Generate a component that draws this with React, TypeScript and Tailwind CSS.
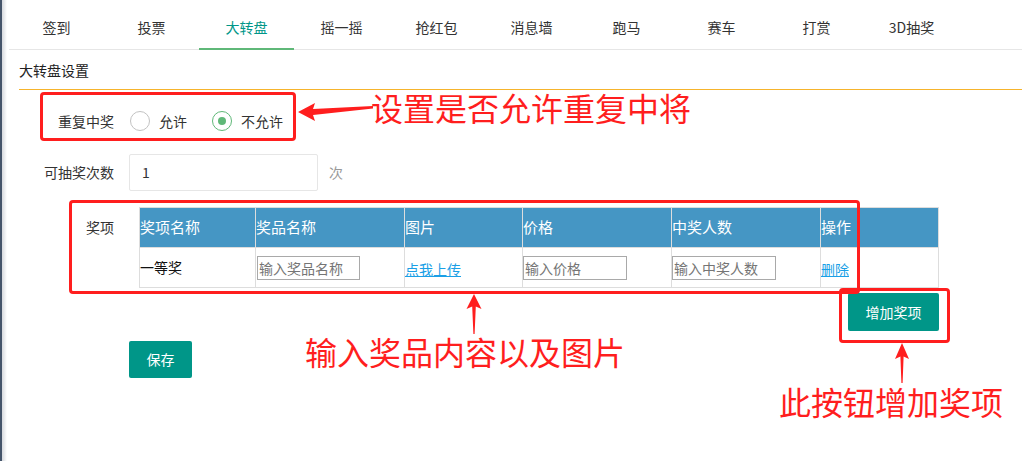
import React from "react";

const tabs = ["签到", "投票", "大转盘", "摇一摇", "抢红包", "消息墙", "跑马", "赛车", "打赏", "3D抽奖"];
const cols = [
    { name: "奖项名称", w: "w-[116px]" },
    { name: "奖品名称", w: "w-[149px]" },
    { name: "图片", w: "w-[118px]" },
    { name: "价格", w: "w-[149px]" },
    { name: "中奖人数", w: "w-[149px]" },
    { name: "操作", w: "w-[118px]" },
];

function Radio({ label, checked }: { label: string; checked?: boolean }) {
    return (
        <label className="flex items-center gap-[9px] cursor-pointer">
            <span
                className={`w-[20px] h-[20px] rounded-full border-[1.5px] flex items-center justify-center ${
                    checked ? "border-[#5fb878]" : "border-[#c2c2c2]"
                }`}
            >
                {checked && <span className="w-[8px] h-[8px] rounded-full bg-[#5fb878]" />}
            </span>
            <span className="text-[14px] text-[#333]">{label}</span>
        </label>
    );
}

function SmallInput({ placeholder, w }: { placeholder: string; w: string }) {
    return (
        <input
            placeholder={placeholder}
            className={`${w} h-[24px] border border-[#a9a9a9] px-[1px] text-[14px] text-[#333] placeholder:text-[#757575] outline-none`}
        />
    );
}

export default function App() {
    return (
        <div className="relative w-[1022px] h-[461px] overflow-hidden bg-white flex font-['Noto_Sans_CJK_SC',sans-serif] text-[#333]">
            <div className="w-[2px] bg-[#44546a] shrink-0" />
            <div className="w-[5px] shrink-0 bg-gradient-to-r from-[#d6d9de] to-white" />

            <div className="flex-1 min-w-0 pl-[2px]">
                {/* tabs */}
                <div className="flex border-b border-[#e6e6e6] h-[50px]">
                    {tabs.map((t, i) => (
                        <div
                            key={t}
                            className={`w-[95px] h-[50px] flex items-center justify-center pt-[6px] text-[14px] border-b-2 ${
                                i === 2 ? "border-[#5fb878] text-[#009688]" : "border-transparent text-[#333]"
                            }`}
                        >
                            {t}
                        </div>
                    ))}
                </div>

                <div className="ml-[10px]">
                    <div className="h-[40px] border-b border-[#f6b42c] flex items-center pt-[1px] text-[14px] text-[#222]">
                        大转盘设置
                    </div>

                    {/* form */}
                    <div className="pt-[12px]">
                        <div className="flex items-center h-[38px]">
                            <div className="w-[95px] text-right text-[14px]">重复中奖</div>
                            <div className="ml-[16px] flex items-center gap-[25px]">
                                <Radio label="允许" />
                                <Radio label="不允许" checked />
                            </div>
                        </div>

                        <div className="flex items-center mt-[14px] h-[37px]">
                            <div className="w-[95px] text-right text-[14px]">可抽奖次数</div>
                            <div className="ml-[15px] w-[189px] h-[37px] border border-[#e6e6e6] rounded-[2px] flex items-center pl-[12px] text-[14px]">
                                1
                            </div>
                            <div className="ml-[11px] text-[14px] text-[#999]">次</div>
                        </div>

                        <div className="flex items-start mt-[16px]">
                            <div className="w-[95px] text-right text-[14px] h-[40px] flex items-center justify-end">奖项</div>
                            <div className="ml-[25px]">
                                <table className="border-collapse border border-[#dddddd]">
                                    <thead>
                                        <tr className="bg-[#4596c4] h-[40px]">
                                            {cols.map((c) => (
                                                <th
                                                    key={c.name}
                                                    className={`${c.w} border border-[#dddddd] text-left font-normal text-white text-[15px] px-0 align-middle`}
                                                >
                                                    {c.name}
                                                </th>
                                            ))}
                                        </tr>
                                    </thead>
                                    <tbody>
                                        <tr className="h-[40px]">
                                            <td className="border border-[#dddddd] text-[14px] text-[#111]">一等奖</td>
                                            <td className="border border-[#dddddd] pl-[1px]">
                                                <SmallInput placeholder="输入奖品名称" w="w-[103px]" />
                                            </td>
                                            <td className="border border-[#dddddd]">
                                                <a className="text-[14px] text-[#1a9fe6] underline cursor-pointer">点我上传</a>
                                            </td>
                                            <td className="border border-[#dddddd]">
                                                <SmallInput placeholder="输入价格" w="w-[104px]" />
                                            </td>
                                            <td className="border border-[#dddddd]">
                                                <SmallInput placeholder="输入中奖人数" w="w-[104px]" />
                                            </td>
                                            <td className="border border-[#dddddd]">
                                                <a className="text-[14px] text-[#1a9fe6] underline cursor-pointer">删除</a>
                                            </td>
                                        </tr>
                                    </tbody>
                                </table>
                                <div className="flex justify-end mt-[5px]">
                                    <button className="w-[91px] h-[38px] rounded-[2px] bg-[#009688] text-white text-[14px]">
                                        增加奖项
                                    </button>
                                </div>
                            </div>
                        </div>

                        <div className="ml-[110px] mt-[10px]">
                            <button className="w-[63px] h-[37px] rounded-[2px] bg-[#009688] text-white text-[14px]">保存</button>
                        </div>
                    </div>
                </div>
            </div>

            {/* annotations */}
            <div className="absolute left-[40px] top-[92px] w-[256px] h-[49px] border-[3px] border-[#ff1e1e] rounded-[4px]" />
            <svg className="absolute left-[298px] top-[100px]" width="76" height="22" viewBox="0 0 76 22">
                <path d="M0 12 L17 3 L15 9 L75 6 L75 8.5 L15 15 L17 21 Z" fill="#ff1e1e" />
            </svg>
            <div className="absolute left-[371px] top-[86px] text-[32px] leading-[42px] text-[#ff1e1e] whitespace-nowrap">
                设置是否允许重复中将
            </div>

            <div className="absolute left-[69px] top-[200px] w-[791px] h-[94px] border-[3px] border-[#ff1e1e] rounded-[4px]" />
            <svg className="absolute left-[465px] top-[294px]" width="18" height="40" viewBox="0 0 18 40">
                <path d="M9 0 L16.5 15 L10.8 12.5 L9.6 40 L8.4 40 L7.2 12.5 L1.5 15 Z" fill="#ff1e1e" />
            </svg>
            <div className="absolute left-[305px] top-[330px] text-[32px] leading-[42px] text-[#ff1e1e] whitespace-nowrap">
                输入奖品内容以及图片
            </div>

            <div className="absolute left-[839px] top-[288px] w-[111px] h-[55px] border-[3px] border-[#ff1e1e] rounded-[4px]" />
            <svg className="absolute left-[893px] top-[343px]" width="18" height="40" viewBox="0 0 18 40">
                <path d="M9 0 L16 16 L10.6 13.5 L9.6 40 L8.4 40 L7.4 13.5 L2 16 Z" fill="#ff1e1e" />
            </svg>
            <div className="absolute left-[779px] top-[380px] text-[32px] leading-[42px] text-[#ff1e1e] whitespace-nowrap">
                此按钮增加奖项
            </div>
        </div>
    );
}
